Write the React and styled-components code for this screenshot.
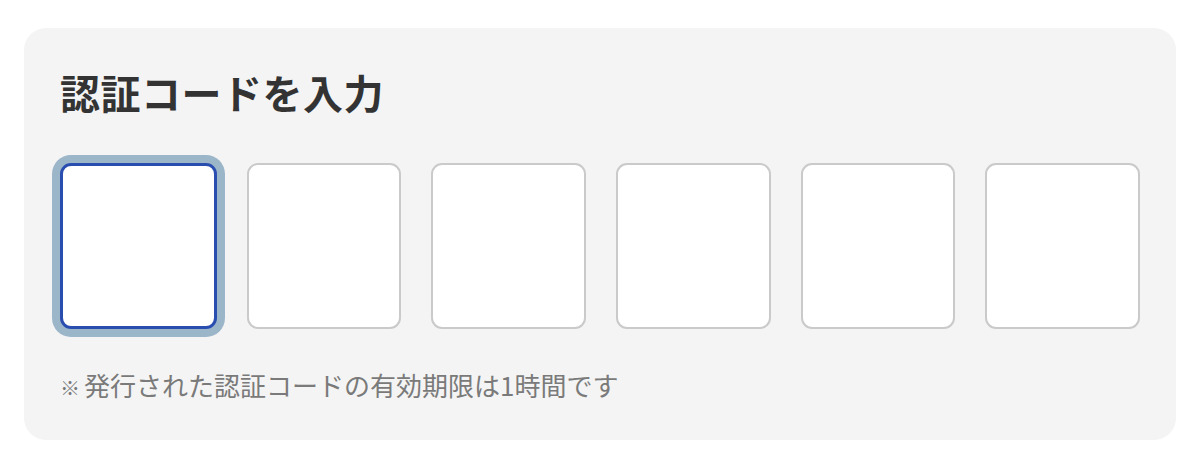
import React from 'react';
import styled, { createGlobalStyle } from 'styled-components';

const DIGITS = 6;

export default () => (
  <>
    <Global />
    <Card>
      <Title>認証コードを入力</Title>
      <Row>
        {Array.from({ length: DIGITS }).map((_, i) => (
          <CodeBox key={i} $active={i === 0} type="text" maxLength={1} inputMode="numeric" />
        ))}
      </Row>
      <Note>
        <Mark>※</Mark>発行された認証コードの有効期限は1時間です
      </Note>
    </Card>
  </>
);

const Global = createGlobalStyle`
  html, body {
    margin: 0;
    background: #fff;
  }
  body {
    padding: 28px 24px;
    font-family: "Noto Sans CJK JP", "Noto Sans", sans-serif;
  }
`;

const Card = styled.section`
  box-sizing: border-box;
  width: 1152px;
  height: 412px;
  padding: 40px 36px 0;
  background: #f4f4f4;
  border-radius: 22px;
`;

const Title = styled.h2`
  margin: 0;
  font-size: 40px;
  line-height: 48px;
  font-weight: 700;
  color: #333;
  letter-spacing: 0.5px;
`;

const Row = styled.div`
  display: flex;
  gap: 30px;
  margin-top: 47px;
`;

const CodeBox = styled.input`
  box-sizing: border-box;
  flex: 1;
  min-width: 0;
  height: 166px;
  padding: 0;
  background: #fff;
  border: ${p => (p.$active ? '3px solid #2a4db0' : '2px solid #cacaca')};
  border-radius: 11px;
  box-shadow: ${p => (p.$active ? '0 0 0 8px #9bb5c9' : 'none')};
  font-family: inherit;
  font-size: 64px;
  text-align: center;
  color: #333;
  outline: none;
`;

const Note = styled.p`
  margin: 38px 0 0;
  font-size: 26px;
  line-height: 36px;
  color: #7a7a7a;
`;

const Mark = styled.span`
  font-size: 20px;
  margin-right: 4px;
`;
